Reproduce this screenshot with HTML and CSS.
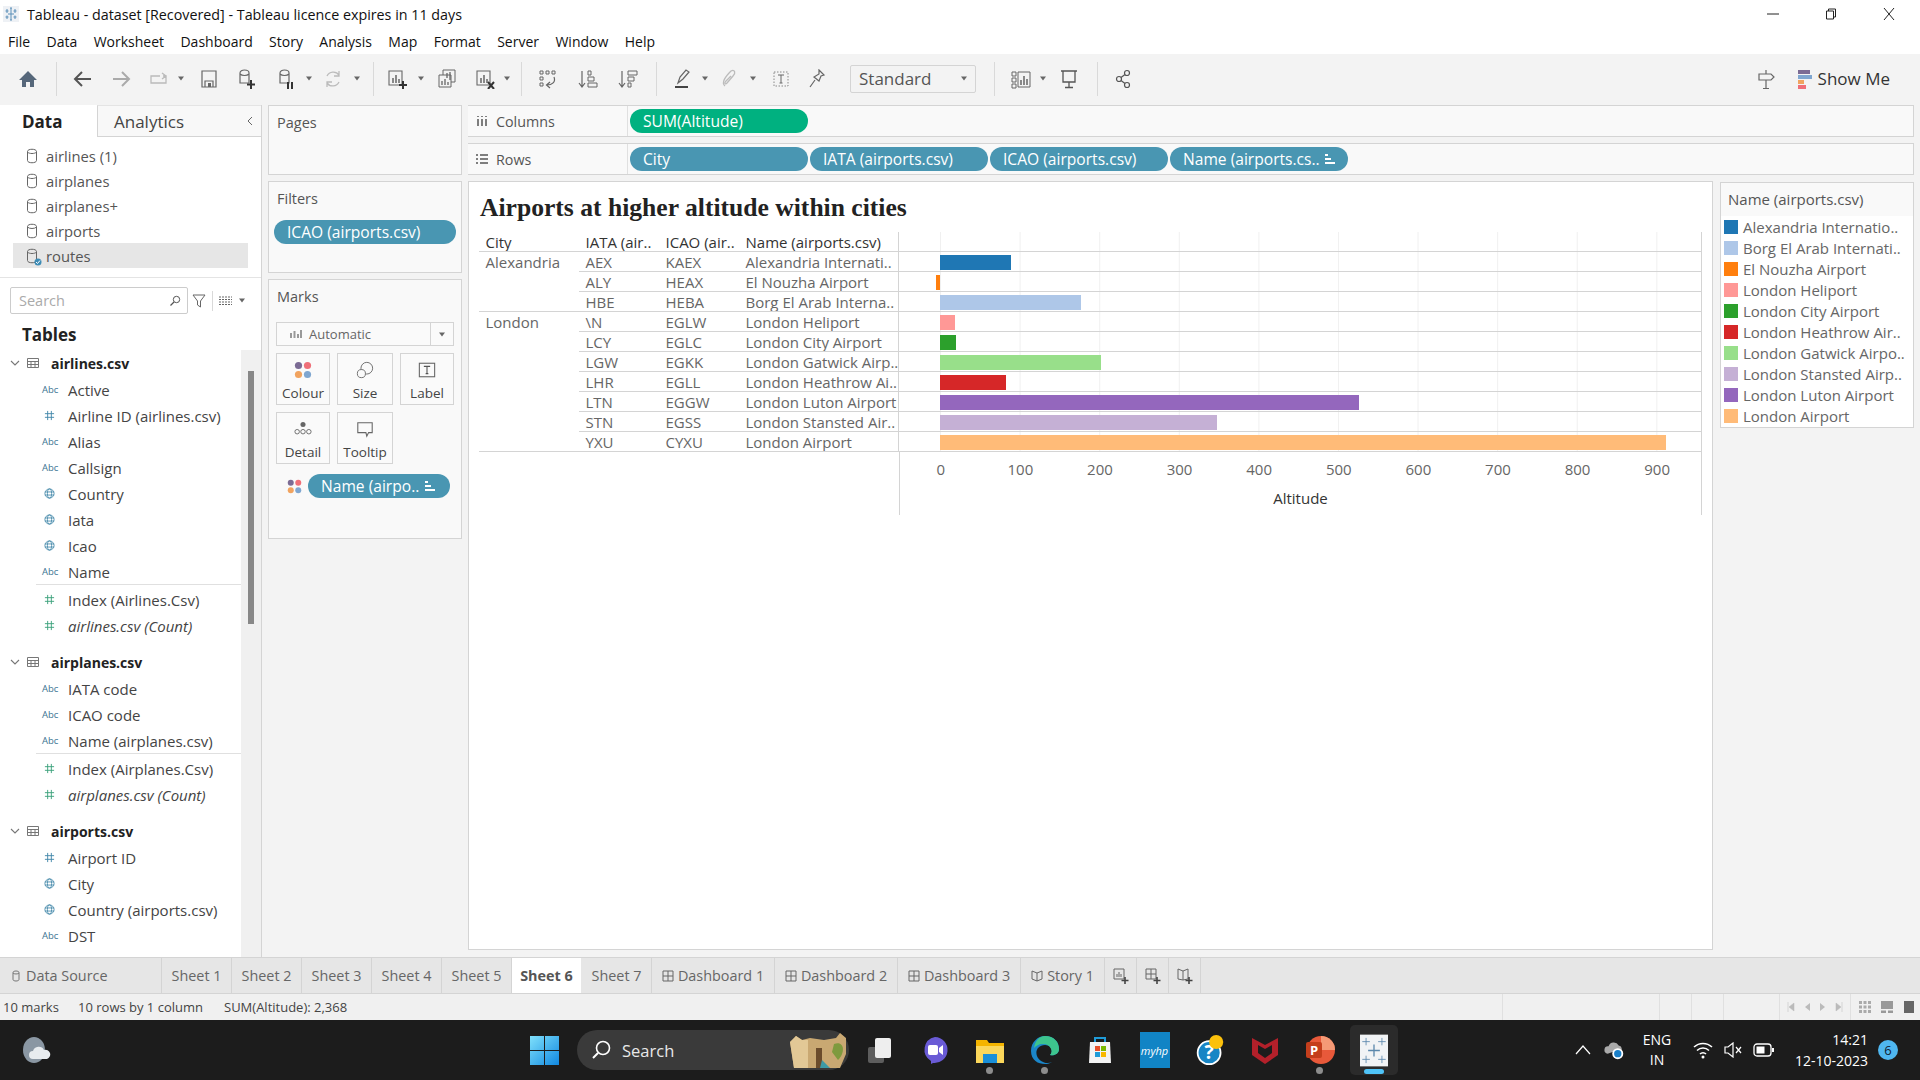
FILE: index.html
```html
<!DOCTYPE html>
<html lang="en">
<head>
<meta charset="utf-8">
<title>Tableau - dataset [Recovered]</title>
<link rel="stylesheet" href="styles.css">
</head>
<body>
<svg class="defs" aria-hidden="true">
  <defs>
    <symbol id="cyl" viewBox="0 0 12 16"><path d="M1.5 3.5C1.500 .5 10.500 .5 10.500 3.500V12.500C10.500 15.500 1.500 15.500 1.500 12.500ZM1.500 4C3 6 9 6 10.500 4" fill="none" stroke="#666" stroke-width="1"/></symbol>
    <symbol id="hash" viewBox="0 0 12 12"><path d="M4 1V11M8 1V11M1 4H11M1 8H11" fill="none" stroke="currentColor" stroke-width="1"/></symbol>
    <symbol id="globe" viewBox="0 0 12 12"><g fill="none" stroke="currentColor" stroke-width=".9"><circle cx="6" cy="6" r="5"/><ellipse cx="6" cy="6" rx="2.300" ry="5"/><path d="M1 4.300H11M1 7.700H11"/></g></symbol>
    <symbol id="tbl" viewBox="0 0 12 10"><path d="M.5.5H11.500V9.500H.5ZM.5 3.500H11.500M.5 6.500H11.500M4 3.500V9.500M8 3.500V9.500" fill="none" stroke="#777" stroke-width="1"/></symbol>
    <symbol id="chev" viewBox="0 0 10 6"><path d="M1 1L5 5L9 1" fill="none" stroke="#777" stroke-width="1.100"/></symbol>
    <symbol id="tri" viewBox="0 0 8 5"><path d="M1 .5H7L4 4.500Z" fill="#666"/></symbol>
    <symbol id="dots" viewBox="0 0 16 16"><circle cx="4" cy="4" r="3.200" fill="#7b6b94"/><circle cx="12" cy="4" r="3.200" fill="#ef6f78"/><circle cx="4" cy="12" r="3.200" fill="#f1a35f"/><circle cx="12" cy="12" r="3.200" fill="#7fa6d0"/></symbol>
    <symbol id="sortbars" viewBox="0 0 12 12"><path d="M1 1H4V3H1ZM1 5H7V7H1ZM1 9H11V11H1Z" fill="#fff"/></symbol>
    <symbol id="dsmall" viewBox="0 0 8 12"><path d="M1 2.500C1 .5 7 .5 7 2.500V9.500C7 11.500 1 11.500 1 9.500ZM1 3C2 4.300 6 4.300 7 3" fill="none" stroke="#777"/></symbol>
    <symbol id="dash" viewBox="0 0 12 12"><path d="M1 1H11V11H1ZM6 1V11M1 6H11" fill="none" stroke="#666"/></symbol>
    <symbol id="plus" viewBox="0 0 20 20"><path d="M10 1V19M1 10H19" stroke="#5b87ab" stroke-width="2"/></symbol>
  </defs>
</svg>

<header class="titlebar">
  <svg class="app-icon" viewBox="0 0 16 16"><rect width="16" height="16" fill="#eef1f5"/><path d="M8 2V14M5 8H11M4 3V7M2.500 5H5.500M12 3V7M10.500 5H13.500M4 9.500V13M2.500 11H5.500M12 9.500V13M10.500 11H13.500M8 1V3M8 13V15" stroke="#5b8fb8" stroke-width="1"/></svg>
  <span class="title-text">Tableau - dataset [Recovered] - Tableau licence expires in 11 days</span>
  <div class="winctl">
    <svg class="winbtn" viewBox="0 0 12 12"><path d="M0 6H12" stroke="#222"/></svg>
    <svg class="winbtn" viewBox="0 0 12 12"><path d="M1.500 3H8.500V11H1.500ZM3.500 3V1H10.500V9H8.500" fill="none" stroke="#222"/></svg>
    <svg class="winbtn" viewBox="0 0 12 12"><path d="M1 0L11 12M11 0L1 12" stroke="#222"/></svg>
  </div>
</header>

<nav class="menubar">
  <span>File</span><span>Data</span><span>Worksheet</span><span>Dashboard</span><span>Story</span><span>Analysis</span><span>Map</span><span>Format</span><span>Server</span><span>Window</span><span>Help</span>
</nav>

<div class="toolbar">
  <svg class="ti" viewBox="0 0 20 20"><path d="M10 2L19 11H16V18H12V13H8V18H4V11H1Z" fill="#56677a"/></svg>
  <i class="sep g18"></i>
  <svg class="ti g16" viewBox="0 0 20 20"><path d="M18 10H3M9 3L2 10L9 17" fill="none" stroke="#555" stroke-width="2"/></svg>
  <svg class="ti g18" viewBox="0 0 20 20"><path d="M2 10H17M11 3L18 10L11 17" fill="none" stroke="#aaa" stroke-width="2"/></svg>
  <svg class="ti g18" viewBox="0 0 20 20"><path d="M11 7H2V14H17V7H14M13 4L17 7L13 10" fill="none" stroke="#bbb" stroke-width="1.300"/></svg>
  <svg class="car g8"><use href="#tri"/></svg>
  <svg class="ti g14" viewBox="0 0 20 20"><path d="M3 2H17V18H3ZM6 18V12H14V18" fill="none" stroke="#666" stroke-width="1.200"/><path d="M9 14H12V18H9Z" fill="#666"/></svg>
  <svg class="ti g18" viewBox="0 0 20 20"><path d="M3 4C3 0 12 0 12 4V14H3ZM3 5C5 7 10 7 12 5" fill="none" stroke="#666" stroke-width="1.200"/><path d="M14 11V20M10 15.500H18" stroke="#333" stroke-width="2"/></svg>
  <svg class="ti g20" viewBox="0 0 20 20"><path d="M3 4C3 0 12 0 12 4V14H3ZM3 5C5 7 10 7 12 5" fill="none" stroke="#666" stroke-width="1.200"/><path d="M11 13V20M15 13V20" stroke="#333" stroke-width="2"/></svg>
  <svg class="car g8"><use href="#tri"/></svg>
  <svg class="ti g10" viewBox="0 0 20 20"><path d="M4 7A7 7 0 0 1 16 6M16 13A7 7 0 0 1 4 14M16 2V7H11M4 18V13H9" fill="none" stroke="#bbb" stroke-width="1.300"/></svg>
  <svg class="car g10"><use href="#tri"/></svg>
  <i class="sep g12"></i>
  <svg class="ti g13" viewBox="0 0 20 20"><path d="M2 2H15V16H2Z" fill="none" stroke="#666" stroke-width="1.100"/><path d="M6 14V9M9 14V6M12 14V10" stroke="#666" stroke-width="1.500"/><path d="M16 12V20M12 16H20" stroke="#333" stroke-width="2"/></svg>
  <svg class="car g10"><use href="#tri"/></svg>
  <svg class="ti g12" viewBox="0 0 20 20"><path d="M6 1H18V13H6Z" fill="none" stroke="#666"/><path d="M2 6H14V18H2Z" fill="#f3f3f3" stroke="#666"/><path d="M5 16V12M8 16V10M11 16V13M10 9V4M13 11V3" stroke="#666" stroke-width="1.300"/></svg>
  <svg class="ti g18" viewBox="0 0 20 20"><path d="M2 2H15V16H2Z" fill="none" stroke="#666" stroke-width="1.100"/><path d="M6 14V9M9 14V6M12 14V10" stroke="#666" stroke-width="1.500"/><path d="M13 13L19 20M19 13L13 20" stroke="#333" stroke-width="2"/></svg>
  <svg class="car g8"><use href="#tri"/></svg>
  <i class="sep g10"></i>
  <svg class="ti g16" viewBox="0 0 20 20"><path d="M2 2H5V5H2ZM8 2H11V5H8ZM14 2H17V5H14ZM2 8H5V11H2ZM2 14H5V17H2Z" fill="none" stroke="#666"/><path d="M16 8C18 13 14 16 9 16M12 13L8.500 16L12 19" fill="none" stroke="#666" stroke-width="1.200"/></svg>
  <svg class="ti g20" viewBox="0 0 20 20"><path d="M4 2V17M1 14L4 18L7 14" fill="none" stroke="#666" stroke-width="1.200"/><path d="M10 2H13V6H10ZM10 8H16V12H10ZM10 14H19V18H10Z" fill="none" stroke="#666"/></svg>
  <svg class="ti g20" viewBox="0 0 20 20"><path d="M4 2V17M1 14L4 18L7 14" fill="none" stroke="#666" stroke-width="1.200"/><path d="M10 2H19V6H10ZM10 8H16V12H10ZM10 14H13V18H10Z" fill="none" stroke="#666"/></svg>
  <i class="sep g18"></i>
  <svg class="ti g16" viewBox="0 0 20 20"><path d="M5 14L7 8L13 1L16 3L10 10L5 14Z" fill="none" stroke="#666" stroke-width="1.200"/><path d="M2 18H15" stroke="#444" stroke-width="2"/></svg>
  <svg class="car g8"><use href="#tri"/></svg>
  <svg class="ti g10" viewBox="0 0 20 20"><path d="M6 17C2 14 6 8 12 2C16 0 17 4 14 7L8 14C6 16 5 14 7 12L12 7" fill="none" stroke="#bbb" stroke-width="1.300"/></svg>
  <svg class="car g10"><use href="#tri"/></svg>
  <svg class="ti g14" viewBox="0 0 20 20"><path d="M3 3H17V17H3Z" fill="none" stroke="#888" stroke-dasharray="1.500 1.500"/><path d="M7 6H13M10 6V14M8.500 14H11.500" stroke="#666" fill="none"/></svg>
  <svg class="ti g16" viewBox="0 0 20 20"><path d="M12 1L17 6L14 7L12 12L7 8L12 5ZM8 11L3 18" fill="none" stroke="#666" stroke-width="1.200"/></svg>
  <div class="std g23"><span>Standard</span><svg class="car"><use href="#tri"/></svg></div>
  <i class="sep g18"></i>
  <svg class="ti g16" viewBox="0 0 20 20"><path d="M1 3H5V7H1ZM1 9H5V13H1ZM1 15H5V19H1ZM7 3H19V18H7Z" fill="none" stroke="#666"/><path d="M10 16V11M13 16V7M16 16V10" stroke="#666" stroke-width="1.500"/></svg>
  <svg class="car g8"><use href="#tri"/></svg>
  <svg class="ti g12" viewBox="0 0 20 20"><path d="M2 2H18M4 2V13H16V2M10 13V18M6 18.500H14" fill="none" stroke="#555" stroke-width="1.300"/></svg>
  <i class="sep g18"></i>
  <svg class="ti g16" viewBox="0 0 20 20"><g fill="none" stroke="#555" stroke-width="1.200"><circle cx="13" cy="4" r="2.500"/><circle cx="5" cy="10" r="2.500"/><circle cx="13" cy="16" r="2.500"/><path d="M11 5.500L7 8.500M7 11.500L11 14.500"/></g></svg>
  <div class="showme">
    <svg class="ti" viewBox="0 0 20 20"><path d="M10 1V5M10 11V19M7 19.500H13M3 5H15L18 8L15 11H3Z" fill="none" stroke="#666" stroke-width="1.200"/></svg>
    <svg class="sm-bars" viewBox="0 0 14 20"><rect y="1" width="12" height="4" fill="#7b6b94"/><rect y="6" width="14" height="4" fill="#7fa6d0"/><rect y="11" width="6" height="4" fill="#f1a35f"/><rect y="16" width="8" height="4" fill="#ef6f78"/></svg>
    <span>Show Me</span>
  </div>
</div>

<main class="main">
  <aside class="datapane">
    <div class="dtabs">
      <div class="dtab on">Data</div>
      <div class="dtab off">Analytics<svg class="collapse" viewBox="0 0 6 10"><path d="M5 1L1 5L5 9" fill="none" stroke="#666"/></svg></div>
    </div>
    <ul class="sources">
      <li><svg class="cyl"><use href="#cyl"/></svg>airlines (1)</li>
      <li><svg class="cyl"><use href="#cyl"/></svg>airplanes</li>
      <li><svg class="cyl"><use href="#cyl"/></svg>airplanes+</li>
      <li><svg class="cyl"><use href="#cyl"/></svg>airports</li>
      <li class="sel"><svg class="cyl"><use href="#cyl"/></svg><svg class="check" viewBox="0 0 8 8"><circle cx="4" cy="4" r="3.500" fill="#3d8bb5"/><path d="M2 4L3.500 5.500L6 2.500" stroke="#fff" fill="none"/></svg>routes</li>
    </ul>
    <div class="searchrow">
      <div class="search"><span>Search</span><svg class="mag" viewBox="0 0 12 12"><circle cx="7.500" cy="4.500" r="3.200" fill="none" stroke="#555"/><path d="M5 7L1.500 10.500" stroke="#555" stroke-width="1.300"/></svg></div>
      <svg class="funnel" viewBox="0 0 14 14"><path d="M1 1H13L8.500 7V13L5.500 11V7Z" fill="none" stroke="#666"/></svg>
      <i class="vsep"></i>
      <svg class="listic" viewBox="0 0 13 10"><path d="M0 1H13M0 3.500H13M0 6H13M0 8.500H13" stroke="#666" stroke-dasharray="2 1"/></svg>
      <svg class="car lcar"><use href="#tri"/></svg>
    </div>
    <div class="tables-h">Tables</div>
    <div class="fieldswrap">
      <div class="fields">
        <div class="grp"><svg class="chev"><use href="#chev"/></svg><svg class="tbl"><use href="#tbl"/></svg>airlines.csv</div>
        <div class="f"><span class="abc">Abc</span>Active</div>
        <div class="f"><svg class="fi dim"><use href="#hash"/></svg>Airline ID (airlines.csv)</div>
        <div class="f"><span class="abc">Abc</span>Alias</div>
        <div class="f"><span class="abc">Abc</span>Callsign</div>
        <div class="f"><svg class="fi dim"><use href="#globe"/></svg>Country</div>
        <div class="f"><svg class="fi dim"><use href="#globe"/></svg>Iata</div>
        <div class="f"><svg class="fi dim"><use href="#globe"/></svg>Icao</div>
        <div class="f"><span class="abc">Abc</span>Name</div>
        <div class="fsep"></div>
        <div class="f"><svg class="fi mea"><use href="#hash"/></svg>Index (Airlines.Csv)</div>
        <div class="f it"><svg class="fi mea"><use href="#hash"/></svg>airlines.csv (Count)</div>
        <div class="grp next"><svg class="chev"><use href="#chev"/></svg><svg class="tbl"><use href="#tbl"/></svg>airplanes.csv</div>
        <div class="f"><span class="abc">Abc</span>IATA code</div>
        <div class="f"><span class="abc">Abc</span>ICAO code</div>
        <div class="f"><span class="abc">Abc</span>Name (airplanes.csv)</div>
        <div class="fsep"></div>
        <div class="f"><svg class="fi mea"><use href="#hash"/></svg>Index (Airplanes.Csv)</div>
        <div class="f it"><svg class="fi mea"><use href="#hash"/></svg>airplanes.csv (Count)</div>
        <div class="grp next"><svg class="chev"><use href="#chev"/></svg><svg class="tbl"><use href="#tbl"/></svg>airports.csv</div>
        <div class="f"><svg class="fi dim"><use href="#hash"/></svg>Airport ID</div>
        <div class="f"><svg class="fi dim"><use href="#globe"/></svg>City</div>
        <div class="f"><svg class="fi dim"><use href="#globe"/></svg>Country (airports.csv)</div>
        <div class="f"><span class="abc">Abc</span>DST</div>
      </div>
      <div class="track"><div class="thumb"></div></div>
    </div>
  </aside>

  <section class="cards">
    <div class="card pages"><div class="card-h">Pages</div></div>
    <div class="card filters">
      <div class="card-h">Filters</div>
      <div class="pill blue filterpill">ICAO (airports.csv)</div>
    </div>
    <div class="card marks">
      <div class="card-h">Marks</div>
      <div class="marksel">
        <svg class="mi" viewBox="0 0 12 10"><path d="M1 9V4M4.500 9V2M8 9V5M11 9V1" stroke="#999" stroke-width="2"/></svg>
        <span>Automatic</span>
        <div class="marksel-c"><svg class="car"><use href="#tri"/></svg></div>
      </div>
      <div class="markgrid">
        <div class="mbtn"><svg class="mbi"><use href="#dots"/></svg>Colour</div>
        <div class="mbtn"><svg class="mbi" viewBox="0 0 20 20"><circle cx="12" cy="8" r="6.500" fill="none" stroke="#666"/><circle cx="6" cy="14" r="4.500" fill="#fafafa" stroke="#666"/></svg>Size</div>
        <div class="mbtn"><svg class="mbi" viewBox="0 0 20 20"><rect x="1.500" y="2.500" width="17" height="15" fill="none" stroke="#666" stroke-width="1.200"/><path d="M6.500 6H13.500M10 6V14M8.500 14H11.500" stroke="#555" fill="none" stroke-width="1.200"/></svg>Label</div>
        <div class="mbtn"><svg class="mbi" viewBox="0 0 20 20"><circle cx="10" cy="5" r="2.800" fill="#666"/><g fill="none" stroke="#666"><circle cx="3.500" cy="13" r="2.500"/><circle cx="10" cy="13" r="2.500"/><circle cx="16.500" cy="13" r="2.500"/></g></svg>Detail</div>
        <div class="mbtn"><svg class="mbi" viewBox="0 0 20 20"><path d="M2 3H18V14H14L12 18L11 14H2Z" fill="none" stroke="#666" stroke-width="1.200"/></svg>Tooltip</div>
      </div>
      <div class="markpill">
        <svg class="mpdots"><use href="#dots"/></svg>
        <div class="pill blue mp">Name (airpo..<svg class="sb"><use href="#sortbars"/></svg></div>
      </div>
    </div>
  </section>

  <section class="work">
    <div class="shelf">
      <div class="shelf-l"><svg class="shi" viewBox="0 0 12 12"><path d="M2 1V2M6 1V2M10 1V2M2 4V11M6 4V11M10 4V11" stroke="#555" stroke-width="1.500"/></svg>Columns</div>
      <div class="pills"><div class="pill green w178">SUM(Altitude)</div></div>
    </div>
    <div class="shelf">
      <div class="shelf-l"><svg class="shi" viewBox="0 0 12 12"><path d="M0 2H2M4 2H12M0 6H2M4 6H12M0 10H2M4 10H12" stroke="#555" stroke-width="1.500"/></svg>Rows</div>
      <div class="pills">
        <div class="pill blue w178">City</div>
        <div class="pill blue w178">IATA (airports.csv)</div>
        <div class="pill blue w178">ICAO (airports.csv)</div>
        <div class="pill blue w178">Name (airports.cs..<svg class="sb"><use href="#sortbars"/></svg></div>
      </div>
    </div>
    <div class="lower">
      <div class="viz">
        <h1 class="viztitle">Airports at higher altitude within cities</h1>
        <div class="vt">
          <div class="vr head"><div class="c">City</div><div class="c">IATA (air..</div><div class="c">ICAO (air..</div><div class="c nm">Name (airports.csv)</div><div class="c pl"></div></div>
          <div class="vr"><div class="c"><span>Alexandria</span></div><div class="c b">AEX</div><div class="c b">KAEX</div><div class="c b nm">Alexandria Internati..</div><div class="c b pl"><i class="bar" style="width:71px;background:#1f77b4"></i></div></div>
          <div class="vr"><div class="c"></div><div class="c b">ALY</div><div class="c b">HEAX</div><div class="c b nm">El Nouzha Airport</div><div class="c b pl"><i class="bar neg" style="width:4px;background:#ff7f0e"></i></div></div>
          <div class="vr"><div class="c b"></div><div class="c b">HBE</div><div class="c b">HEBA</div><div class="c b nm">Borg El Arab Interna..</div><div class="c b pl"><i class="bar" style="width:141px;background:#aec7e8"></i></div></div>
          <div class="vr"><div class="c"><span>London</span></div><div class="c b">\N</div><div class="c b">EGLW</div><div class="c b nm">London Heliport</div><div class="c b pl"><i class="bar" style="width:15px;background:#ff9896"></i></div></div>
          <div class="vr"><div class="c"></div><div class="c b">LCY</div><div class="c b">EGLC</div><div class="c b nm">London City Airport</div><div class="c b pl"><i class="bar" style="width:16px;background:#2ca02c"></i></div></div>
          <div class="vr"><div class="c"></div><div class="c b">LGW</div><div class="c b">EGKK</div><div class="c b nm">London Gatwick Airp..</div><div class="c b pl"><i class="bar" style="width:161px;background:#98df8a"></i></div></div>
          <div class="vr"><div class="c"></div><div class="c b">LHR</div><div class="c b">EGLL</div><div class="c b nm">London Heathrow Ai..</div><div class="c b pl"><i class="bar" style="width:66px;background:#d62728"></i></div></div>
          <div class="vr"><div class="c"></div><div class="c b">LTN</div><div class="c b">EGGW</div><div class="c b nm">London Luton Airport</div><div class="c b pl"><i class="bar" style="width:419px;background:#9467bd"></i></div></div>
          <div class="vr"><div class="c"></div><div class="c b">STN</div><div class="c b">EGSS</div><div class="c b nm">London Stansted Air..</div><div class="c b pl"><i class="bar" style="width:277px;background:#c5b0d5"></i></div></div>
          <div class="vr"><div class="c b"></div><div class="c b">YXU</div><div class="c b">CYXU</div><div class="c b nm">London Airport</div><div class="c b pl"><i class="bar" style="width:726px;background:#ffbb78"></i></div></div>
          <div class="axis">
            <div class="axis-in">
              <div class="ticks"><span>0</span><span>100</span><span>200</span><span>300</span><span>400</span><span>500</span><span>600</span><span>700</span><span>800</span><span>900</span></div>
              <div class="axlabel">Altitude</div>
            </div>
          </div>
        </div>
      </div>
      <div class="legend">
        <div class="leg-h">Name (airports.csv)</div>
        <div class="leg-i"><i style="background:#1f77b4"></i>Alexandria Internatio..</div>
        <div class="leg-i"><i style="background:#aec7e8"></i>Borg El Arab Internati..</div>
        <div class="leg-i"><i style="background:#ff7f0e"></i>El Nouzha Airport</div>
        <div class="leg-i"><i style="background:#ff9896"></i>London Heliport</div>
        <div class="leg-i"><i style="background:#2ca02c"></i>London City Airport</div>
        <div class="leg-i"><i style="background:#d62728"></i>London Heathrow Air..</div>
        <div class="leg-i"><i style="background:#98df8a"></i>London Gatwick Airpo..</div>
        <div class="leg-i"><i style="background:#c5b0d5"></i>London Stansted Airp..</div>
        <div class="leg-i"><i style="background:#9467bd"></i>London Luton Airport</div>
        <div class="leg-i"><i style="background:#ffbb78"></i>London Airport</div>
      </div>
    </div>
  </section>
</main>

<div class="tabs">
  <div class="tab t-ds"><svg class="ts"><use href="#dsmall"/></svg>Data Source</div>
  <div class="tab t-s">Sheet 1</div>
  <div class="tab t-s">Sheet 2</div>
  <div class="tab t-s">Sheet 3</div>
  <div class="tab t-s">Sheet 4</div>
  <div class="tab t-s">Sheet 5</div>
  <div class="tab t-s on">Sheet 6</div>
  <div class="tab t-s">Sheet 7</div>
  <div class="tab t-d"><svg class="ts"><use href="#dash"/></svg>Dashboard 1</div>
  <div class="tab t-d"><svg class="ts"><use href="#dash"/></svg>Dashboard 2</div>
  <div class="tab t-d"><svg class="ts"><use href="#dash"/></svg>Dashboard 3</div>
  <div class="tab t-st"><svg class="ts" viewBox="0 0 12 12"><path d="M1 1L6 3L11 1V9L6 11L1 9ZM6 3V11" fill="none" stroke="#666"/></svg>Story 1</div>
  <div class="tab t-n"><svg class="tn" viewBox="0 0 16 16"><path d="M1 1H11V11H1Z" fill="none" stroke="#666"/><path d="M4 9V6M6 9V4M8 9V6" stroke="#666"/><path d="M12 9V16M8.500 12.500H15.500" stroke="#444" stroke-width="1.600"/></svg></div>
  <div class="tab t-n"><svg class="tn" viewBox="0 0 16 16"><path d="M1 1H11V11H1ZM6 1V11M1 6H11" fill="none" stroke="#666"/><path d="M12 9V16M8.500 12.500H15.500" stroke="#444" stroke-width="1.600"/></svg></div>
  <div class="tab t-n"><svg class="tn" viewBox="0 0 16 16"><path d="M1 1L6 3L11 1V11L6 12L1 11ZM6 3V12" fill="none" stroke="#666"/><path d="M12 9V16M8.500 12.500H15.500" stroke="#444" stroke-width="1.600"/></svg></div>
</div>

<div class="status">
  <span class="st1">10 marks</span><span class="st2">10 rows by 1 column</span><span class="st3">SUM(Altitude): 2,368</span>
  <div class="st-right">
    <i class="st-cell w157"></i><i class="st-cell w32"></i><i class="st-cell w32"></i><i class="st-cell w56"></i>
    <div class="st-cell w71 nav">
      <svg viewBox="0 0 8 10"><path d="M1 0V10M7 1V9L2 5Z" fill="#bbb" stroke="#bbb" stroke-width=".5"/></svg>
      <svg viewBox="0 0 8 10"><path d="M7 1V9L2 5Z" fill="#bbb"/></svg>
      <svg viewBox="0 0 8 10"><path d="M1 1V9L6 5Z" fill="#bbb"/></svg>
      <svg viewBox="0 0 8 10"><path d="M7 0V10M1 1V9L6 5Z" fill="#bbb" stroke="#bbb" stroke-width=".5"/></svg>
    </div>
    <div class="st-cell views">
      <svg viewBox="0 0 12 12"><path d="M0 0H3V3H0ZM4.500 0H7.500V3H4.500ZM9 0H12V3H9ZM0 4.500H3V7.500H0ZM4.500 4.500H7.500V7.500H4.500ZM9 4.500H12V7.500H9ZM0 9H3V12H0ZM4.500 9H7.500V12H4.500ZM9 9H12V12H9Z" fill="#aaa"/></svg>
      <svg viewBox="0 0 12 12"><path d="M0 0H12V8H0ZM0 9.500H5V12H0ZM7 9.500H12V12H7Z" fill="#999"/></svg>
      <svg viewBox="0 0 12 12"><path d="M1 0H11V12H1Z" fill="#666"/></svg>
    </div>
  </div>
</div>

<footer class="taskbar">
  <svg class="weather" viewBox="0 0 28 28"><ellipse cx="11" cy="14" rx="11" ry="13" fill="#8a97a3"/><path d="M10 23A4 4 0 0 1 10 15A6 6 0 0 1 21 14A4.500 4.500 0 0 1 24 23Z" fill="#e8ecef"/></svg>
  <svg class="winlogo" viewBox="0 0 29 29"><defs><linearGradient id="wg" x1="0" y1="0" x2="1" y2="1"><stop offset="0" stop-color="#7fe0fb"/><stop offset="1" stop-color="#1188e0"/></linearGradient></defs><path d="M0 0H14V14H0ZM15 0H29V14H15ZM0 15H14V29H0ZM15 15H29V29H15Z" fill="url(#wg)"/></svg>
  <div class="tsearch">
    <svg class="tmag" viewBox="0 0 20 20"><circle cx="12" cy="8" r="6.500" fill="none" stroke="#fff" stroke-width="1.600"/><path d="M7 13L2 18" stroke="#fff" stroke-width="2"/></svg>
    <span>Search</span>
    <svg class="doodle" viewBox="0 0 60 36"><path d="M2 10L8 4L14 8L22 6L36 8L48 6L52 1L58 6L58 22L52 36H6Z" fill="#c9a872"/><path d="M2 10L8 4L14 8L20 8L20 36H6Z" fill="#e2c896"/><path d="M28 16H34V36H28Z" fill="#6b4c2c"/><path d="M46 12C56 8 58 20 50 28L44 20Z" fill="#7f9a3e"/><path d="M34 28L42 36H32Z" fill="#3d9aa5"/></svg>
  </div>
  <div class="apps">
    <div class="app"><svg class="ai" viewBox="0 0 30 30"><rect x="3" y="12" width="16" height="16" rx="2" fill="#5d5d5d"/><rect x="10" y="3" width="16" height="20" rx="2" fill="#eee"/></svg></div>
    <div class="app"><svg class="ai" viewBox="0 0 30 30"><path d="M15 2A13 13 0 1 1 13 27.900L11 29V26A13 13 0 0 1 15 2Z" fill="#6a5bd6"/><rect x="8" y="10" width="10" height="10" rx="2" fill="#fff"/><path d="M19 13L23 10V20L19 17Z" fill="#fff"/></svg></div>
    <div class="app dot"><svg class="ai" viewBox="0 0 30 30"><path d="M1 5H12L14 8H29V28H1Z" fill="#f4b400"/><path d="M1 11H29V28H1Z" fill="#fbd75b"/><rect x="8" y="19" width="14" height="9" fill="#1a8fd8"/></svg></div>
    <div class="app dot"><svg class="ai" viewBox="0 0 30 30"><path d="M15 1C24 1 29 7 29 14C29 19 24 21 20 20C24 16 21 10 15 10C8 10 5 16 7 21C9 26 16 30 22 27C17 31 1 30 1 16C1 7 8 1 15 1Z" fill="#1b86c9"/><path d="M15 1C24 1 29 7 29 14C29 19 24 21 20 20C24 16 20 8 12 9C9 9 6 11 4 13C5 6 9 1 15 1Z" fill="#3dc48d"/></svg></div>
    <div class="app"><svg class="ai" viewBox="0 0 30 30"><path d="M10 8V3H20V8" fill="none" stroke="#1f9bd8" stroke-width="2"/><path d="M5 7H25L26 28H4Z" fill="#f3f3f3"/><rect x="10" y="11" width="5" height="5" fill="#e8502a"/><rect x="16" y="11" width="5" height="5" fill="#7ab800"/><rect x="10" y="17" width="5" height="5" fill="#1e9bd8"/><rect x="16" y="17" width="5" height="5" fill="#f9b800"/></svg></div>
    <div class="app"><div class="hp">myhp</div></div>
    <div class="app"><svg class="ai" viewBox="0 0 30 34"><circle cx="14" cy="20" r="13" fill="#1785c5" stroke="#fff" stroke-width="2"/><text class="q" x="14" y="27">?</text><circle cx="22" cy="8" r="8" fill="#fcc10c"/></svg></div>
    <div class="app"><svg class="ai" viewBox="0 0 30 30"><path d="M2 3L15 10L28 3V20L15 29L2 20Z" fill="#b3202a"/><path d="M8 10L15 14L22 10V18L15 23L8 18Z" fill="#1c1c1c"/></svg></div>
    <div class="app dot"><svg class="ai" viewBox="0 0 30 30"><circle cx="16" cy="15" r="14" fill="#e8593a"/><path d="M16 1A14 14 0 0 1 30 15H16Z" fill="#f59a76"/><rect x="1" y="7" width="16" height="16" rx="2" fill="#c43e1c"/><text class="pp" x="9" y="20">P</text></svg></div>
    <div class="app act"><svg class="tb" viewBox="0 0 30 34"><rect width="30" height="34" fill="#f1f3f5"/><use href="#plus" x="8" y="10" width="14" height="14"/><use href="#plus" x="2" y="3" width="9" height="9"/><use href="#plus" x="19" y="3" width="9" height="9"/><use href="#plus" x="2" y="22" width="9" height="9"/><use href="#plus" x="19" y="22" width="9" height="9"/></svg><i class="actbar"></i></div>
  </div>
  <div class="tray">
    <svg class="tr-car" viewBox="0 0 16 10"><path d="M1 9L8 1L15 9" fill="none" stroke="#fff" stroke-width="1.200"/></svg>
    <svg class="tr-cloud" viewBox="0 0 24 24"><path d="M4 16A4 4 0 0 1 5 8A6 6 0 0 1 16 7A4 4 0 0 1 18 14H10Z" fill="#aaa"/><circle cx="15" cy="16" r="6" fill="#fff"/><circle cx="15" cy="16" r="4" fill="#1a7fc8"/></svg>
    <div class="lang"><span>ENG</span><span>IN</span></div>
    <svg class="tr-wifi" viewBox="0 0 20 18"><path d="M1 6A13 13 0 0 1 19 6M4 9.500A8.500 8.500 0 0 1 16 9.500M7 13A4 4 0 0 1 13 13" fill="none" stroke="#fff" stroke-width="1.500"/><circle cx="10" cy="16" r="1.500" fill="#fff"/></svg>
    <svg class="tr-snd" viewBox="0 0 18 16"><path d="M1 5H4L9 1V15L4 11H1Z" fill="none" stroke="#fff" stroke-width="1.200"/><path d="M12 5L17 11M17 5L12 11" stroke="#fff" stroke-width="1.200"/></svg>
    <svg class="tr-bat" viewBox="0 0 22 14"><rect x="1" y="1" width="17" height="12" rx="3" fill="none" stroke="#fff" stroke-width="1.300"/><rect x="3.500" y="3.500" width="8" height="7" fill="#fff"/><rect x="19" y="5" width="2" height="4" fill="#fff"/></svg>
    <div class="clock"><span>14:21</span><span>12-10-2023</span></div>
    <div class="notif">6</div>
  </div>
</footer>
</body>
</html>
```
FILE: styles.css
```css
* { box-sizing: border-box; }
html, body { margin: 0; padding: 0; }
body {
  width: 1920px; height: 1080px; overflow: hidden;
  display: flex; flex-direction: column;
  font-family: "Open Sans", Lato, sans-serif; font-size: 14px; color: #333;
  background: #f3f3f3;
}
.defs { width: 0; height: 0; position: absolute; }
svg { display: block; flex: none; }
i { display: block; }
ul { list-style: none; margin: 0; padding: 0; }

.titlebar { height: 28px; background: #fff; display: flex; align-items: center; padding-left: 3px; flex: none; }
.app-icon { width: 16px; height: 16px; }
.title-text { margin-left: 8px; color: #111; font-size: 14.300px; }
.winctl { margin-left: auto; display: flex; gap: 46px; padding-right: 25px; }
.winbtn { width: 12px; height: 12px; }

.menubar { height: 26px; background: #fff; display: flex; align-items: center; gap: 16.400px; padding-left: 8px; flex: none; font-size: 14px; color: #111; }

.toolbar { height: 51px; flex: none; background: #f3f3f3; display: flex; align-items: center; padding: 0 30px 2px 18px; }
.ti { width: 20px; height: 20px; }
.car { width: 8px; height: 5px; }
.sep { width: 1px; height: 34px; background: #d9d9d9; }
.g8 { margin-left: 8px; } .g10 { margin-left: 10px; } .g12 { margin-left: 12px; } .g13 { margin-left: 13px; } .g14 { margin-left: 14px; } .g16 { margin-left: 16px; }
.g18 { margin-left: 18px; } .g20 { margin-left: 20px; } .g23 { margin-left: 23px; }
.std { width: 126px; height: 28px; border: 1px solid #d4d4d4; border-radius: 2px; display: flex; align-items: center; justify-content: space-between; padding: 0 7px 0 8px; font-size: 17px; color: #555; }
.showme { margin-left: auto; display: flex; align-items: center; font-size: 17px; color: #333; }
.sm-bars { width: 14px; height: 20px; margin-left: 22px; }
.showme span { margin-left: 6px; }

.main { flex: 1; display: flex; min-height: 0; }
.datapane { width: 262px; background: #fff; border-right: 1px solid #d4d4d4; display: flex; flex-direction: column; flex: none; }
.dtabs { display: flex; height: 32px; flex: none; }
.dtab { font-size: 17px; display: flex; align-items: center; }
.dtab.on { width: 97px; font-weight: 700; color: #222; padding-left: 22px; }
.dtab.off { flex: 1; background: #f8f8f8; border-left: 1px solid #d4d4d4; border-bottom: 1px solid #d4d4d4; padding-left: 16px; color: #444; justify-content: space-between; padding-right: 8px; border-top: 1px solid #e4e4e4; }
.collapse { width: 6px; height: 10px; }
.sources { padding: 6px 13px 10px; border-bottom: 1px solid #e4e4e4; height: 141px; flex: none; }
.sources li { height: 25px; display: flex; align-items: center; padding-left: 13px; font-size: 14.800px; color: #555; position: relative; }
.sources li.sel { background: #e6e6e6; }
.cyl { width: 12px; height: 16px; margin-right: 8px; }
.check { width: 8px; height: 8px; position: absolute; left: 21px; top: 15px; }
.searchrow { display: flex; align-items: center; height: 27px; margin: 9px 0 0 10px; flex: none; }
.search { width: 178px; height: 27px; border: 1px solid #ccc; border-radius: 2px; display: flex; align-items: center; justify-content: space-between; padding: 0 6px 0 8px; font-size: 14.500px; color: #aaa; }
.mag { width: 12px; height: 12px; }
.funnel { width: 14px; height: 14px; margin-left: 4px; }
.vsep { width: 1px; height: 20px; background: #d9d9d9; margin-left: 6px; }
.listic { width: 13px; height: 10px; margin-left: 6px; }
.lcar { margin-left: 6px; }
.tables-h { height: 36px; flex: none; font-weight: 700; font-size: 17px; color: #222; padding: 9px 0 0 22px; line-height: 24px; }
.fieldswrap { flex: 1; display: flex; min-height: 0; }
.fields { flex: 1; overflow: hidden; }
.track { width: 20px; background: #f0f0f0; padding: 21px 7px 0; }
.thumb { height: 253px; background: #888; }
.grp { height: 26px; display: flex; align-items: center; font-weight: 700; font-size: 14px; color: #222; padding-left: 10px; }
.grp.next { margin-top: 11px; }
.chev { width: 10px; height: 6px; }
.tbl { width: 12px; height: 10px; margin: 0 12px 0 7px; }
.f { height: 26px; display: flex; align-items: center; padding: 1px 0 0 42px; font-size: 15px; color: #444; }
.f.it { font-style: italic; }
.abc { width: 26px; font-size: 9.500px; color: #3a7391; flex: none; }
.fi { width: 11px; height: 11px; margin: 0 13px 0 2px; }
.fi.dim { color: #3f86a8; }
.fi.mea { color: #39a07a; }
.fsep { height: 1px; background: #e0e0e0; margin: 0 0 1px 36px; }

.cards { width: 194px; margin-left: 6px; flex: none; display: flex; flex-direction: column; gap: 6px; }
.card { background: #f9f9f9; border: 1px solid #d4d4d4; }
.card-h { font-size: 14.500px; color: #555; padding: 7px 0 0 8px; line-height: 20px; height: 27px; }
.pages { height: 70px; }
.filters { height: 92px; }
.marks { height: 260px; }
.pill { height: 24px; border-radius: 12px; color: #fff; font-size: 15.600px; line-height: 24px; padding-left: 13px; display: flex; align-items: center; justify-content: space-between; padding-right: 12px; flex: none; }
.blue { background: #4996b2; }
.green { background: #00b180; }
.w178 { width: 178px; }
.filterpill { margin: 11px 5px 0; }
.marksel { height: 24px; margin: 15px 7px 0; border: 1px solid #d4d4d4; background: #fafafa; display: flex; align-items: center; padding-left: 13px; font-size: 13px; color: #666; }
.mi { width: 12px; height: 10px; margin-right: 7px; }
.marksel-c { margin-left: auto; width: 23px; height: 100%; border-left: 1px solid #d4d4d4; display: flex; align-items: center; justify-content: center; }
.markgrid { display: grid; grid-template-columns: 54px 56px 54px; gap: 7px 7px; margin: 7px 7px 0; }
.mbtn { height: 52px; border: 1px solid #d4d4d4; background: #fafafa; display: flex; flex-direction: column; align-items: center; padding: 7px 0 1px; font-size: 13.500px; color: #444; line-height: 20px; justify-content: space-between; }
.mbi { width: 18px; height: 18px; }
.markpill { display: flex; align-items: center; margin: 10px 0 0 18px; }
.mpdots { width: 15px; height: 15px; }
.mp { width: 142px; margin-left: 6px; padding-right: 14px; }
.sb { width: 12px; height: 12px; }

.work { flex: 1; margin-left: 6px; padding-right: 6px; display: flex; flex-direction: column; min-width: 0; }
.shelf { height: 32px; background: #f9f9f9; border: 1px solid #d4d4d4; border-left: 0; display: flex; margin-bottom: 6px; flex: none; }
.shelf-l { width: 160px; border-right: 1px solid #e0e0e0; display: flex; align-items: center; padding-left: 8px; font-size: 14.300px; color: #555; }
.shi { width: 12px; height: 12px; margin-right: 8px; }
.pills { display: flex; gap: 2px; padding: 3px 0 0 2px; }
.lower { flex: 1; display: flex; gap: 7px; min-height: 0; }
.viz { width: 1245px; height: 769px; background: #fff; border: 1px solid #d4d4d4; padding: 11px 10px 0; }
.viztitle { margin: 0 0 9px 1px; font-family: "Liberation Serif", serif; font-weight: 700; font-size: 25.600px; line-height: 30px; color: #222; }
.vt { font-size: 15px; color: #666; }
.vr { display: grid; grid-template-columns: 100px 80px 80px 160px 1fr; height: 20px; }
.c { padding-left: 6.500px; line-height: 21px; white-space: nowrap; overflow: hidden; }
.head .c { color: #333; line-height: 20px; border-bottom: 1px solid #d4d4d4; }
.c.b { border-bottom: 1px solid #d4d4d4; }
.nm { border-right: 1px solid #d4d4d4; }
.pl {
  padding: 3px 0 0 41px; border-right: 1px solid #d4d4d4; overflow: visible;
  background-image: linear-gradient(to right, #f0f0f0 1px, transparent 1px);
  background-size: 79.600px 100%; background-position: 41px 0;
}
.bar { height: 15px; }
.bar.neg { margin-left: -4px; }
.axis { padding-left: 420px; }
.axis-in { height: 63px; border-left: 1px solid #d4d4d4; border-right: 1px solid #d4d4d4; }
.ticks { display: flex; padding: 8px 0 0 1px; line-height: 18px; color: #666; }
.ticks span { width: 79.600px; text-align: center; flex: none; }
.axlabel { text-align: center; color: #333; margin-top: 10px; line-height: 20px; }
.legend { width: 194px; height: 246px; background: #fff; border: 1px solid #d4d4d4; margin-top: 1px; }
.leg-h { height: 33px; background: #f9f9f9; font-size: 15px; color: #555; padding-left: 7px; line-height: 33px; }
.leg-i { height: 21px; display: flex; align-items: center; padding-left: 3px; font-size: 15px; color: #666; white-space: nowrap; }
.leg-i i { width: 14px; height: 14px; margin-right: 5px; flex: none; }

.tabs { height: 37px; flex: none; background: #e6e6e6; border-top: 1px solid #d4d4d4; border-bottom: 1px solid #d4d4d4; display: flex; font-size: 14.400px; color: #666; }
.tab { border-right: 1px solid #d4d4d4; display: flex; align-items: center; justify-content: center; }
.t-ds { width: 162px; justify-content: flex-start; padding-left: 10px; }
.t-s { width: 70px; }
.t-s.on { background: #fff; font-weight: 700; color: #555; border-right-color: #e6e6e6; }
.t-d { width: 123px; }
.t-st { width: 84px; }
.t-n { width: 32px; }
.ts { width: 12px; height: 12px; margin-right: 4px; }
.tn { width: 16px; height: 16px; }

.status { height: 26px; flex: none; background: #f0f0f0; display: flex; align-items: center; font-size: 13px; color: #444; white-space: nowrap; }
.st1 { margin-left: 3px; width: 75px; }
.st2 { width: 146px; }
.st-right { margin-left: auto; display: flex; height: 100%; }
.st-cell { border-left: 1px solid #e0e0e0; height: 100%; }
.w157 { width: 157px; } .w32 { width: 32px; } .w56 { width: 56px; } .w71 { width: 71px; }
.nav { display: flex; align-items: center; justify-content: center; gap: 8px; }
.nav svg { width: 8px; height: 10px; }
.views { width: 70px; display: flex; align-items: center; gap: 10px; padding-left: 8px; }
.views svg { width: 12px; height: 12px; }

.taskbar { height: 60px; flex: none; background: #1c1c1c; display: flex; align-items: center; padding-left: 23px; color: #fff; }
.weather { width: 28px; height: 28px; }
.winlogo { width: 29px; height: 29px; margin-left: 479px; }
.tsearch { width: 272px; height: 40px; margin-left: 18px; background: #3a3a3a; border-radius: 20px; display: flex; align-items: center; padding-left: 14px; font-size: 16.500px; color: #e8e8e8; position: relative; }
.tmag { width: 20px; height: 20px; }
.tsearch span { margin-left: 11px; }
.doodle { width: 60px; height: 36px; margin-left: auto; margin-right: 1px; }
.apps { display: flex; margin-left: 3px; height: 100%; }
.app { width: 55px; display: flex; align-items: center; justify-content: center; position: relative; }
.ai { width: 30px; height: 30px; }
.dot::after { content: ""; position: absolute; left: 24px; bottom: 6px; width: 7px; height: 7px; border-radius: 50%; background: #8d8d8d; }
.hp { width: 30px; height: 36px; background: #1184c5; color: #fff; font-size: 11px; font-style: italic; display: flex; align-items: center; justify-content: center; }
.q { font-size: 22px; font-weight: 700; fill: #fff; text-anchor: middle; }
.pp { font-size: 13px; font-weight: 700; fill: #fff; text-anchor: middle; }
.act { background: #2b2b2b; border-radius: 5px; height: 50px; margin-top: 5px; width: 48px; margin-left: 3px; }
.tb { width: 28px; height: 33px; }
.actbar { position: absolute; left: 14px; bottom: 1px; width: 20px; height: 5px; border-radius: 3px; background: #4fc3f7; }
.tray { display: flex; align-items: center; margin-left: 177px; }
.tr-car { width: 16px; height: 10px; }
.tr-cloud { width: 22px; height: 22px; margin-left: 13px; }
.lang { display: flex; flex-direction: column; align-items: center; width: 46px; margin-left: 8px; font-size: 14px; line-height: 20px; }
.tr-wifi { width: 20px; height: 18px; margin-left: 13px; }
.tr-snd { width: 18px; height: 16px; margin-left: 11px; }
.tr-bat { width: 22px; height: 14px; margin-left: 11px; }
.clock { width: 78px; margin-left: 15px; display: flex; flex-direction: column; align-items: flex-end; font-size: 14px; line-height: 21px; white-space: nowrap; }
.notif { width: 20px; height: 20px; margin-left: 10px; border-radius: 50%; background: #4fb7f0; color: #123; font-size: 13px; display: flex; align-items: center; justify-content: center; }
```
